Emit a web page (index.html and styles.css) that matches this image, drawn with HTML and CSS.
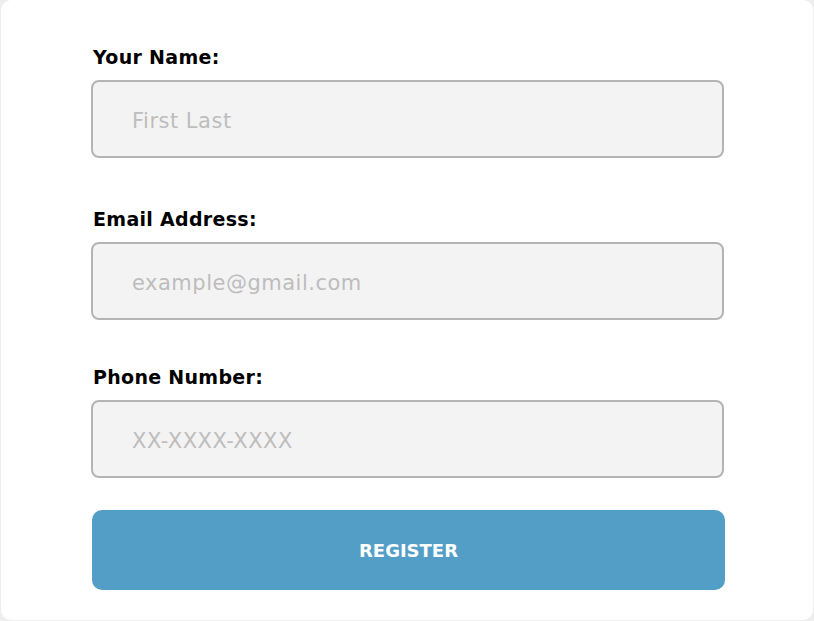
FILE: index.html
```html
<!DOCTYPE html>
<html lang="en">
<head>
<meta charset="utf-8">
<title>Register</title>
<link rel="stylesheet" href="styles.css">
</head>
<body>
<div class="card">
  <form class="form">
    <div class="field field-name">
      <label class="label" for="name">Your Name:</label>
      <input class="input" id="name" type="text" placeholder="First Last">
    </div>
    <div class="field field-email">
      <label class="label" for="email">Email Address:</label>
      <input class="input" id="email" type="email" placeholder="example@gmail.com">
    </div>
    <div class="field field-phone">
      <label class="label" for="phone">Phone Number:</label>
      <input class="input" id="phone" type="tel" placeholder="XX-XXXX-XXXX">
    </div>
    <button class="btn" type="button">REGISTER</button>
  </form>
</div>
</body>
</html>
```

FILE: styles.css
```css
* { box-sizing: border-box; }
html, body { margin: 0; padding: 0; }
body {
  background: #eeeeee;
  font-family: "DejaVu Sans", "Inter", sans-serif;
  width: 814px;
  height: 621px;
  overflow: hidden;
}
.card {
  background: #ffffff;
  margin: 0 1px;
  height: 620px;
  border-radius: 10px;
  padding: 43px 88px 0 90px;
}
.form {
  display: flex;
  flex-direction: column;
}
.field {
  display: flex;
  flex-direction: column;
  gap: 11px;
}
.field-name { margin-bottom: 47px; }
.field-email { margin-bottom: 43px; }
.field-phone { margin-bottom: 32px; }
.label {
  font-size: 19px;
  line-height: 24px;
  padding-top: 2px;
  font-weight: 700;
  letter-spacing: 0.3px;
  color: #000;
  padding-left: 2px;
}
.input {
  height: 78px;
  width: 633px;
  border: 2px solid #b4b4b4;
  border-radius: 8px;
  background: #f3f3f3;
  padding: 4px 0 0 39px;
  font-family: inherit;
  font-size: 21px;
  letter-spacing: 0.5px;
  color: #333;
  outline: none;
}
.input::placeholder { color: #bdbdbd; }
.btn {
  height: 80px;
  width: 633px;
  margin-left: 1px;
  background: #529ec7;
  border: none;
  border-radius: 10px;
  color: #ffffff;
  font-family: inherit;
  font-size: 18px;
  font-weight: 700;
  cursor: pointer;
}
```
